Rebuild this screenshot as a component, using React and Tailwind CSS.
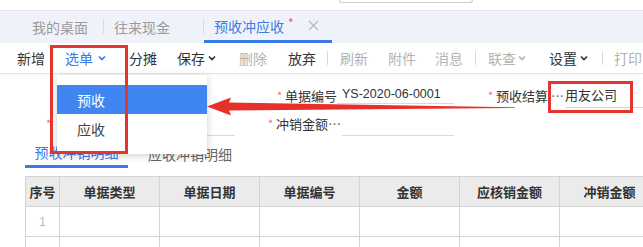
import React from "react";

function Chevron({ className }) {
    return (
        <svg width="8" height="6" viewBox="0 0 8 6" className={className}>
            <path d="M1 1.5l3 3 3-3" fill="none" stroke="currentColor" strokeWidth="1.7" />
        </svg>
    );
}

function Sep({ className }) {
    return <div className={`w-px h-[14px] bg-[#dadada] ${className}`} />;
}

export default function App() {
    return (
        <div className="relative w-[643px] h-[247px] overflow-hidden whitespace-nowrap bg-white font-['Noto_Sans_CJK_SC',sans-serif] text-[#333]">
            {/* strip above the tabs */}
            <div className="h-[10px]">
                <div className="ml-[339px] w-[134px] h-[3px] border border-t-0 border-[#cfcfcf] rounded-b-[3px]" />
            </div>

            {/* page tabs */}
            <div className="h-[33px] flex items-center bg-[#eff3f9] border-t border-[#dfe5ed] text-[14px] leading-none [&>*]:shrink-0">
                <span className="ml-[32px] text-[#9a9a9a]">我的桌面</span>
                <Sep className="ml-[15px] bg-[#d5dbe3]" />
                <span className="ml-[10px] text-[#9a9a9a]">往来现金</span>
                <Sep className="ml-[33px] bg-[#d5dbe3]" />
                <div className="self-stretch w-[128px] flex items-center border-b-[3px] border-[#3a7be8]">
                    <span className="ml-[10px] text-[#3a7be8]">预收冲应收</span>
                    <span className="ml-[4px] text-[#f05a5a] text-[12px] -mt-[6px]">*</span>
                    <svg width="11" height="11" viewBox="0 0 11 11" className="ml-[14px]">
                        <path d="M1 1l9 9M10 1l-9 9" stroke="#b9b9b9" strokeWidth="1.3" />
                    </svg>
                </div>
            </div>

            {/* toolbar */}
            <div className="h-[31px] flex items-center border-b border-[#e6e6e6] shadow-[0_1px_2px_rgba(0,0,0,0.04)] text-[14px] leading-none [&>*]:shrink-0">
                <span className="ml-[17px]">新增</span>
                <span className="ml-[20px] text-[#3a7be8]">选单</span>
                <Chevron className="ml-[5px] text-[#3a7be8]" />
                <span className="ml-[23px]">分摊</span>
                <span className="ml-[20px]">保存</span>
                <Chevron className="ml-[3px]" />
                <span className="ml-[23px] text-[#b3b3b3]">删除</span>
                <span className="ml-[21px]">放弃</span>
                <Sep className="ml-[11px]" />
                <span className="ml-[12px] text-[#b3b3b3]">刷新</span>
                <span className="ml-[20px] text-[#b3b3b3]">附件</span>
                <span className="ml-[19px] text-[#b3b3b3]">消息</span>
                <Sep className="ml-[12px]" />
                <span className="ml-[12px] text-[#b3b3b3]">联查</span>
                <Chevron className="ml-[2px] text-[#b3b3b3]" />
                <span className="ml-[23px]">设置</span>
                <Chevron className="ml-[3px]" />
                <Sep className="ml-[14px]" />
                <span className="ml-[11px] text-[#b3b3b3]">打印</span>
            </div>

            {/* form */}
            <div className="pt-[7px] text-[13px] leading-none">
                <div className="h-[28px] flex items-center [&>*]:shrink-0">
                    <span className="ml-[277px] w-[8px] text-[#f56c6c] text-[11px]">*</span>
                    <span>单据编号</span>
                    <div className="w-[117px] h-[18px] pl-[5px] flex items-center border-b border-[#d9d9d9] font-['Liberation_Sans',sans-serif] text-[12.5px]">
                        YS-2020-06-0001
                    </div>
                    <span className="ml-[34px] w-[8px] text-[#f56c6c] text-[11px]">*</span>
                    <span>预收结算</span>
                    <span className="ml-[3px] w-[12px] text-[#666]">…</span>
                    <div className="ml-[2px] w-[90px] h-[26px] flex items-center border-b border-[#d9d9d9]">
                        用友公司
                    </div>
                </div>
                <div className="h-[28px] flex items-center [&>*]:shrink-0">
                    <span className="ml-[46px] w-[8px] text-[#f56c6c] text-[11px]">*</span>
                    <div className="w-[96px]" />
                    <div className="w-[85px] h-[26px] border-b border-[#d9d9d9]" />
                    <span className="ml-[33px] w-[8px] text-[#f56c6c] text-[11px]">*</span>
                    <span>冲销金额</span>
                    <span className="w-[14px] text-[#666]">…</span>
                    <div className="w-[112px] h-[26px] border-b border-[#d9d9d9]" />
                </div>
            </div>

            {/* sub tabs */}
            <div className="flex h-[31px] text-[14px] leading-none [&>*]:shrink-0">
                <div className="ml-[25px] w-[103px] pt-[2px] flex items-center justify-center border-b-[3px] border-[#3a7be8] text-[#3a7be8]">
                    预收冲销明细
                </div>
                <div className="ml-[20px] pt-[2px] flex items-center text-[#666]">应收冲销明细</div>
            </div>

            {/* table */}
            <div className="ml-[25px] mt-[8px] w-[634px] grid grid-cols-[34px_repeat(6,100px)] border-l border-t border-[#d4d4d4] text-[13px] leading-none">
                {["序号", "单据类型", "单据日期", "单据编号", "金额", "应核销金额", "冲销金额"].map((h) => (
                    <div
                        key={h}
                        className="h-[30px] flex items-center justify-center bg-[#ebebeb] border-r border-b border-[#d4d4d4] font-bold text-[#333]"
                    >
                        {h}
                    </div>
                ))}
                {[1, 2].map((n) =>
                    [0, 1, 2, 3, 4, 5, 6].map((c) => (
                        <div
                            key={`${n}-${c}`}
                            className="h-[30px] flex items-center justify-center border-r border-b border-[#d4d4d4] text-[#bbb] text-[12px] font-['Liberation_Sans',sans-serif]"
                        >
                            {c === 0 ? n : ""}
                        </div>
                    ))
                )}
            </div>

            {/* dropdown menu */}
            <div className="absolute left-[57px] top-[75px] w-[150px] h-[79px] pt-[10px] bg-white shadow-[0_2px_8px_rgba(0,0,0,0.18)] text-[14px] leading-none">
                <div className="h-[29px] pl-[20px] flex items-center bg-[#3f86f1] text-white">预收</div>
                <div className="h-[30px] pl-[20px] flex items-center text-[#444]">应收</div>
            </div>

            {/* annotation boxes */}
            <div className="absolute left-[50px] top-[45px] w-[78px] h-[109px] border-[3px] border-[#e5332d]" />
            <div className="absolute left-[548px] top-[81px] w-[85px] h-[32px] border-[3px] border-[#e5332d]" />

            {/* annotation arrow */}
            <svg className="absolute left-0 top-0 pointer-events-none" width="643" height="247">
                <polygon
                    points="207,106.5 231,97.5 229,102.5 515,107.3 515,107.9 229,110.5 231,115.5"
                    fill="#e8302a"
                />
            </svg>
        </div>
    );
}
